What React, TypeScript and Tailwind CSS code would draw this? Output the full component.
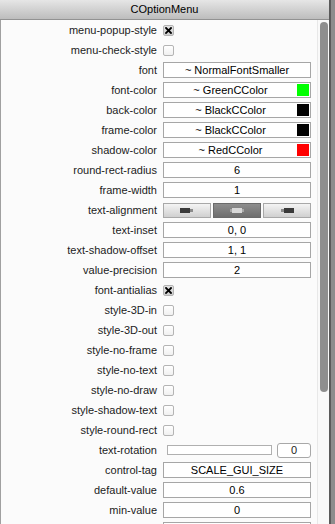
type Row =
  | { label: string; kind: "check"; checked: boolean }
  | { label: string; kind: "text"; value: string; swatch?: string }
  | { label: string; kind: "align" }
  | { label: string; kind: "slider"; value: string };

const rows: Row[] = [
  { label: "menu-popup-style", kind: "check", checked: true },
  { label: "menu-check-style", kind: "check", checked: false },
  { label: "font", kind: "text", value: "~ NormalFontSmaller" },
  { label: "font-color", kind: "text", value: "~ GreenCColor", swatch: "#00ff00" },
  { label: "back-color", kind: "text", value: "~ BlackCColor", swatch: "#000000" },
  { label: "frame-color", kind: "text", value: "~ BlackCColor", swatch: "#000000" },
  { label: "shadow-color", kind: "text", value: "~ RedCColor", swatch: "#ff0000" },
  { label: "round-rect-radius", kind: "text", value: "6" },
  { label: "frame-width", kind: "text", value: "1" },
  { label: "text-alignment", kind: "align" },
  { label: "text-inset", kind: "text", value: "0, 0" },
  { label: "text-shadow-offset", kind: "text", value: "1, 1" },
  { label: "value-precision", kind: "text", value: "2" },
  { label: "font-antialias", kind: "check", checked: true },
  { label: "style-3D-in", kind: "check", checked: false },
  { label: "style-3D-out", kind: "check", checked: false },
  { label: "style-no-frame", kind: "check", checked: false },
  { label: "style-no-text", kind: "check", checked: false },
  { label: "style-no-draw", kind: "check", checked: false },
  { label: "style-shadow-text", kind: "check", checked: false },
  { label: "style-round-rect", kind: "check", checked: false },
  { label: "text-rotation", kind: "slider", value: "0" },
  { label: "control-tag", kind: "text", value: "SCALE_GUI_SIZE" },
  { label: "default-value", kind: "text", value: "0.6" },
  { label: "min-value", kind: "text", value: "0" },
  // only the top edge of the next field peeks in at the bottom
  { label: "", kind: "text", value: "" },
];

function CheckBox({ checked }: { checked: boolean }) {
  return (
    <div
      className={`w-[11px] h-[11px] rounded-[2px] border border-[#b4b4b4] flex items-center justify-center ${
        checked ? "bg-gradient-to-b from-[#e4e4e4] to-[#cfcfcf]" : "bg-gradient-to-b from-white to-[#f0f0f0]"
      }`}
    >
      {checked && (
        <svg width="7" height="7" viewBox="0 0 7 7">
          <path d="M1 1L6 6M6 1L1 6" stroke="#000" strokeWidth="1.8" strokeLinecap="square" />
        </svg>
      )}
    </div>
  );
}

function AlignButtons() {
  return (
    <div className="flex gap-[2px] w-[148px] h-[15px]">
      <div className="flex-1 flex items-center justify-center border border-[#a8a8a8] bg-gradient-to-b from-[#f4f4f4] to-[#d0d0d0]">
        <svg width="14" height="5" viewBox="0 0 14 5">
          <rect x="0" y="0" width="10" height="5" fill="#3a3a3a" />
          <rect x="10" y="1" width="3" height="3" fill="#8a8a8a" />
        </svg>
      </div>
      <div className="flex-1 flex items-center justify-center border border-[#6a6a6a] bg-gradient-to-b from-[#8e8e8e] to-[#6e6e6e]">
        <svg width="14" height="5" viewBox="0 0 14 5">
          <rect x="2" y="0" width="10" height="5" fill="#d8d8d8" />
          <rect x="0" y="1" width="2" height="3" fill="#a8a8a8" />
          <rect x="12" y="1" width="2" height="3" fill="#a8a8a8" />
        </svg>
      </div>
      <div className="flex-1 flex items-center justify-center border border-[#a8a8a8] bg-gradient-to-b from-[#f4f4f4] to-[#d0d0d0]">
        <svg width="14" height="5" viewBox="0 0 14 5">
          <rect x="1" y="1" width="3" height="3" fill="#8a8a8a" />
          <rect x="4" y="0" width="10" height="5" fill="#3a3a3a" />
        </svg>
      </div>
    </div>
  );
}

function Control({ row }: { row: Row }) {
  if (row.kind === "check") return <CheckBox checked={row.checked} />;
  if (row.kind === "align") return <AlignButtons />;
  if (row.kind === "slider")
    return (
      <div className="flex items-center w-[148px]">
        <div className="ml-[4px] w-[105px] h-[10px] border border-[#b0b0b0] bg-white" />
        <div className="ml-[5px] w-[34px] h-[15px] rounded-[3px] border border-[#a8a8a8] bg-white flex items-center justify-center leading-[13px]">
          {row.value}
        </div>
      </div>
    );
  return (
    <div className="w-[148px] h-[16px] border border-[#a6a6a6] bg-white flex items-center leading-[14px]">
      <span className="flex-1 text-center text-black">{row.value}</span>
      {row.swatch && (
        <span className="w-[12px] h-[12px] mr-[1px]" style={{ backgroundColor: row.swatch }} />
      )}
    </div>
  );
}

export default function App() {
  return (
    <div
      className="w-[335px] h-[524px] flex overflow-hidden text-[11px] text-[#1c1c1c]"
      style={{ fontFamily: '"Liberation Sans", Arial, sans-serif' }}
    >
      <div className="w-[329px] flex flex-col">
        <div className="h-[20px] shrink-0 flex items-center justify-center border-b border-[#929292] bg-gradient-to-b from-[#e6e6e6] to-[#bdbdbd] text-black">
          COptionMenu
        </div>
        <div className="flex-1 flex min-h-0 border-l border-[#a0a0a0] bg-[#fbfbfb]">
          <div className="flex-1 overflow-hidden">
            {rows.map((row, i) => (
              <div key={i} className="h-[20px] flex items-center">
                <div className="w-[156px] text-right whitespace-nowrap">{row.label}</div>
                <div className="ml-[6px] flex items-center">
                  <Control row={row} />
                </div>
              </div>
            ))}
          </div>
          <div className="w-[12px] shrink-0 border-l border-[#e8e8e8] bg-[#f9f9f9] pt-[2px] flex justify-center">
            <div className="w-[8px] h-[370px] rounded-full bg-[#8e8e8e]" />
          </div>
        </div>
      </div>
      <div className="w-[2px] bg-[#5a5a5a]" />
      <div className="w-[4px] bg-[#8c8c8c]" />
    </div>
  );
}
